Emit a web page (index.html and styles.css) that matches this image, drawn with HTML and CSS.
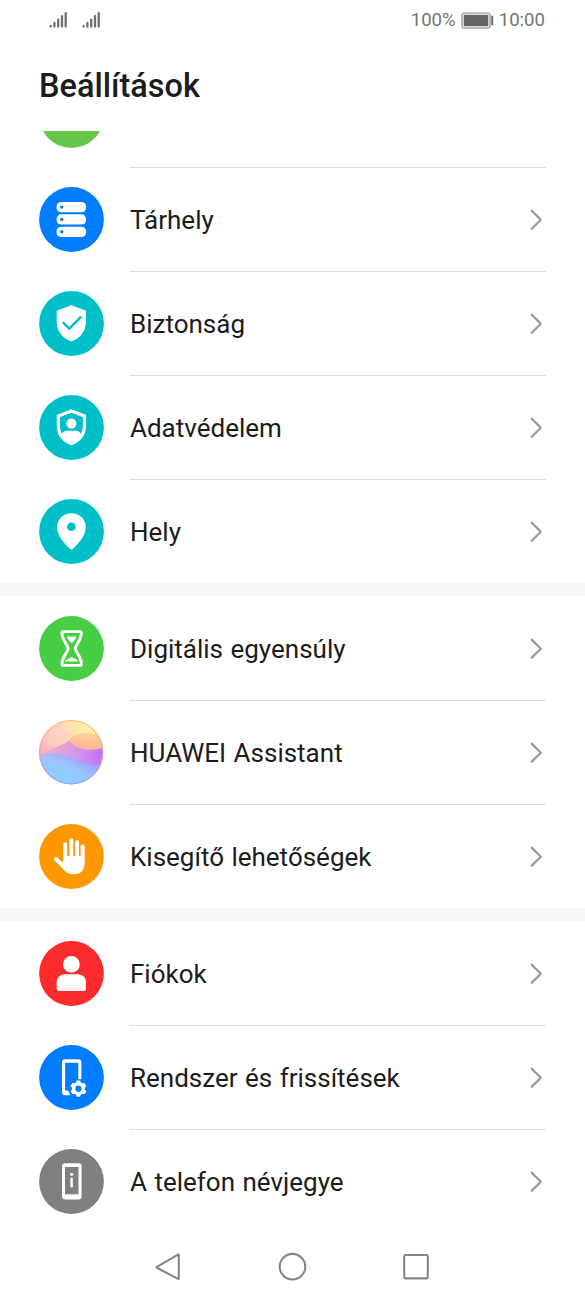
FILE: index.html
```html
<!DOCTYPE html>
<html lang="hu">
<head>
<meta charset="utf-8">
<title>Beállítások</title>
<link rel="stylesheet" href="styles.css">
</head>
<body>
<svg class="defs" width="0" height="0" aria-hidden="true">
  <symbol id="chevron" viewBox="0 0 16 24"><path d="M2.7 2.6 11.8 11.7 2.7 20.8" fill="none" stroke="#9a9a9a" stroke-width="2.3" stroke-linecap="round" stroke-linejoin="round"/></symbol>
  <symbol id="signal" viewBox="0 0 20 18"><path d="M2.6 15v.6M6.4 12v3.6M10.2 8.7v6.9M14 5.2v10.4M17.7 2.2v13.4" stroke="#707070" stroke-width="2.3" stroke-linecap="round"/></symbol>
</svg>
<div class="screen">
  <header class="status">
    <div class="signals">
      <svg class="signal"><use href="#signal"/></svg>
      <svg class="signal"><use href="#signal"/></svg>
    </div>
    <div class="power">
      <span>100%</span>
      <svg class="battery" viewBox="0 0 33 17"><rect x="1" y="1" width="28" height="15" rx="2.5" fill="#fff" stroke="#aaa" stroke-width="1.6"/><rect x="2.7" y="2.7" width="24.6" height="11.6" rx=".8" fill="#656565"/><path d="M31.2 4.5v8" stroke="#707070" stroke-width="2" stroke-linecap="round"/></svg>
      <span>10:00</span>
    </div>
  </header>
  <h1 class="title">Beállítások</h1>
  <main class="list">
    <div class="partial"><svg class="icon" viewBox="0 0 65 65"><circle cx="32.5" cy="32.5" r="32.4" fill="#67c74b"/></svg><div class="partial-body"></div></div>
    <section class="group">
      <div class="row">
        <svg class="icon" viewBox="0 0 65 65"><circle cx="32.5" cy="32.5" r="32.4" fill="#007dff"/><g fill="#fff"><rect x="17.6" y="15" width="29.5" height="10.3" rx="4.6"/><rect x="17.6" y="27.3" width="29.5" height="10.3" rx="4.6"/><rect x="17.6" y="39.7" width="29.5" height="10.3" rx="4.6"/></g><g fill="#007dff"><circle cx="22.7" cy="20.1" r="1.7"/><circle cx="22.7" cy="32.4" r="1.7"/><circle cx="22.7" cy="44.8" r="1.7"/></g></svg>
        <div class="body"><span>Tárhely</span><svg class="chevron"><use href="#chevron"/></svg></div>
      </div>
      <div class="row">
        <svg class="icon" viewBox="0 0 65 65"><circle cx="32.5" cy="32.5" r="32.4" fill="#00bfc9"/><path d="M31.6 14.4Q32.4 14 33.2 14.4L46 19.2Q47 19.6 47 20.7V30C47 40 41.5 46.8 33.4 50.1Q32.4 50.5 31.4 50.1C23.3 46.8 17.7 40 17.7 30V20.7Q17.7 19.6 18.7 19.2Z" fill="#fff"/><path d="m24.6 32 5.6 5.6 11.3-11.3" fill="none" stroke="#00bfc9" stroke-width="2.4" stroke-linecap="round" stroke-linejoin="round"/></svg>
        <div class="body"><span>Biztonság</span><svg class="chevron"><use href="#chevron"/></svg></div>
      </div>
      <div class="row">
        <svg class="icon" viewBox="0 0 65 65"><circle cx="32.5" cy="32.5" r="32.4" fill="#00bfc9"/><path d="M32.4 15.9 45.5 21V30C45.5 39.2 40.5 45.4 32.4 48.6C24.3 45.4 19.3 39.2 19.3 30V21Z" fill="none" stroke="#fff" stroke-width="3.2" stroke-linejoin="round"/><circle cx="32.4" cy="28.6" r="5" fill="#fff"/><path d="M22.2 40.2C23.6 37.2 25.4 35.8 28 35.8H36.8C39.4 35.8 41.2 37.2 42.6 40.2L38.5 45.2 32.4 49 26.3 45.2Z" fill="#fff"/></svg>
        <div class="body"><span>Adatvédelem</span><svg class="chevron"><use href="#chevron"/></svg></div>
      </div>
      <div class="row">
        <svg class="icon" viewBox="0 0 65 65"><circle cx="32.5" cy="32.5" r="32.4" fill="#00bfc9"/><path d="M32.4 14.2C24 14.2 18 20.5 18 28C18 37 26.2 45.4 31 49.9Q32.4 51 33.8 49.9C38.6 45.4 46.8 37 46.8 28C46.8 20.5 40.8 14.2 32.4 14.2Z" fill="#fff"/><circle cx="32.4" cy="27.7" r="4.3" fill="#00bfc9"/></svg>
        <div class="body"><span>Hely</span><svg class="chevron"><use href="#chevron"/></svg></div>
      </div>
    </section>
    <section class="group">
      <div class="row">
        <svg class="icon" viewBox="0 0 65 65"><circle cx="32.5" cy="32.5" r="32.4" fill="#47cd46"/><path d="M24.4 15.6H41Q42.4 15.6 42.4 17C42.4 24 36.8 28.5 36.2 32.5C36.8 36.5 42.4 41 42.4 48Q42.4 49.4 41 49.4H24.4Q23 49.4 23 48C23 41 28.6 36.5 29.2 32.5C28.6 28.5 23 24 23 17Q23 15.6 24.4 15.6Z" fill="none" stroke="#fff" stroke-width="2.9"/><path d="M28.2 21.5C28.2 19.8 31.4 19.8 32.7 21.1C34.2 19.8 37.2 19.8 37.2 21.6C37 23.4 34.6 25.5 32.7 27C30.8 25.6 28.6 23.4 28.2 21.5ZM26 45.6C26.6 43.4 31 42.6 32.7 40.8C34.4 42.6 38.8 43.4 39.4 45.6Z" fill="#fff"/></svg>
        <div class="body"><span>Digitális egyensúly</span><svg class="chevron"><use href="#chevron"/></svg></div>
      </div>
      <div class="row">
        <svg class="icon" viewBox="0 0 65 65"><defs><clipPath id="orb"><circle cx="32.2" cy="32.2" r="32"/></clipPath><linearGradient id="sky" x1="0" y1=".6" x2=".7" y2="0"><stop stop-color="#f9a8c0"/><stop offset=".4" stop-color="#fdcbbb"/><stop offset="1" stop-color="#fff3a8"/></linearGradient><linearGradient id="peach" x1=".6" y1="0" x2=".4" y2="1"><stop stop-color="#ffd590"/><stop offset="1" stop-color="#fbb09a"/></linearGradient><linearGradient id="violet"><stop stop-color="#f7b0c8"/><stop offset=".5" stop-color="#dc9ce4"/><stop offset="1" stop-color="#bb70fa"/></linearGradient><linearGradient id="sea" x1=".2" y1="1" x2=".9" y2=".1"><stop stop-color="#80d6ff"/><stop offset=".55" stop-color="#9ac4ff"/><stop offset="1" stop-color="#a97cff"/></linearGradient><linearGradient id="mist" x1="0" y1="0" x2="0" y2="1"><stop stop-color="#c5b8f6"/><stop offset="1" stop-color="#8ac8ff" stop-opacity="0"/></linearGradient><linearGradient id="rim" x1="0" y1="0" x2="0" y2="1"><stop stop-color="#f9c77f"/><stop offset=".5" stop-color="#f19baf"/><stop offset="1" stop-color="#9aa5f4"/></linearGradient></defs><g clip-path="url(#orb)"><path d="M0 0H65V65H0Z" fill="url(#sky)"/><path d="M7 19C8 5 20 2 26 9C34 17 27 26 16 26C10 25 7 22 7 19Z" fill="#ffcfc4" opacity=".6"/><path d="M0 36C10 28 20 28 31 20C42 27 50 32 65 27V48H0Z" fill="url(#violet)"/><path d="M30 20C37 11 54 11 65 18V27C52 32 37 31 30 20Z" fill="url(#peach)"/><path d="M0 36C11 31 24 33 36 38C46 44 55 46 65 44V65H0Z" fill="url(#sea)"/><path d="M0 36C11 31 24 33 36 38V51H0Z" fill="url(#mist)" opacity=".5"/></g><circle cx="32.2" cy="32.2" r="31.6" fill="none" stroke="url(#rim)" stroke-width="1.2"/></svg>
        <div class="body"><span>HUAWEI Assistant</span><svg class="chevron"><use href="#chevron"/></svg></div>
      </div>
      <div class="row">
        <svg class="icon" viewBox="0 0 65 65"><circle cx="32.5" cy="32.5" r="32.4" fill="#ff9800"/><g fill="none" stroke="#fff" stroke-width="4" stroke-linecap="round"><path d="M26.2 20.2V37M32.3 16.3V35M38 18.2V35M43.6 22.3V36"/><path d="m17 35 8.5 8.5"/></g><path d="M24.2 32H45.6V39C45.6 46 42 50.3 35 50.3C30.2 50.3 27.4 48.8 24.6 45.4L20.6 40 24.2 38Z" fill="#fff"/></svg>
        <div class="body"><span>Kisegítő lehetőségek</span><svg class="chevron"><use href="#chevron"/></svg></div>
      </div>
    </section>
    <section class="group">
      <div class="row">
        <svg class="icon" viewBox="0 0 65 65"><circle cx="32.5" cy="32.5" r="32.4" fill="#fa2a2d"/><circle cx="32.4" cy="23.4" r="8.4" fill="#fff"/><path d="M25.7 33.2H39C44 33.2 47 36.8 47 41.5V47.5Q47 50 44.5 50H20.2Q17.7 50 17.7 47.5V41.5C17.7 36.8 20.8 33.2 25.7 33.2Z" fill="#fff"/></svg>
        <div class="body"><span>Fiókok</span><svg class="chevron"><use href="#chevron"/></svg></div>
      </div>
      <div class="row">
        <svg class="icon" viewBox="0 0 65 65"><circle cx="32.5" cy="32.5" r="32.4" fill="#007dff"/><path d="M31.5 50.2H26Q23 50.2 23 47.2V17.3Q23 14.3 26 14.3H39.4Q42.4 14.3 42.4 17.3V34.3H39.3V17.8H26.1V45.6H29Z" fill="#fff"/><g fill="#fff"><circle cx="39.4" cy="43.7" r="6.6"/><path id="tooth" d="M37 38 37.6 35.6H41.2L41.8 38Z"/><use href="#tooth" transform="rotate(60 39.4 43.7)"/><use href="#tooth" transform="rotate(120 39.4 43.7)"/><use href="#tooth" transform="rotate(180 39.4 43.7)"/><use href="#tooth" transform="rotate(240 39.4 43.7)"/><use href="#tooth" transform="rotate(300 39.4 43.7)"/></g><circle cx="39.4" cy="43.7" r="3.1" fill="#007dff"/></svg>
        <div class="body"><span>Rendszer és frissítések</span><svg class="chevron"><use href="#chevron"/></svg></div>
      </div>
      <div class="row">
        <svg class="icon" viewBox="0 0 65 65"><circle cx="32.5" cy="32.5" r="32.4" fill="#808080"/><rect x="23" y="14.2" width="19.6" height="36.2" rx="3" fill="#fff"/><path d="M26 18H39.5V45.3H26Z" fill="#808080"/><circle cx="32.6" cy="25.3" r="1.6" fill="#fff"/><path d="M32.6 29.8V37.2" stroke="#fff" stroke-width="2.4" stroke-linecap="round"/></svg>
        <div class="body"><span>A telefon névjegye</span><svg class="chevron"><use href="#chevron"/></svg></div>
      </div>
    </section>
  </main>
  <nav class="nav">
    <svg viewBox="0 0 30 30"><path d="M2.9 14.8 24 2.7Q24.8 2.3 24.8 3.3V26.3Q24.8 27.3 24 26.9L2.9 15.8Q2 15.3 2.9 14.8Z"/></svg>
    <svg viewBox="0 0 30 30"><circle cx="14.5" cy="14.7" r="12.8"/></svg>
    <svg viewBox="0 0 30 30"><rect x="2.2" y="3" width="23.6" height="23.4" rx="1.3"/></svg>
  </nav>
</div>
</body>
</html>
```
FILE: styles.css
```css
* { box-sizing: border-box; }
body { margin: 0; background: #fff; font-family: Roboto, "Liberation Sans", sans-serif; color: #1c1c1c; }
svg { display: block; flex: none; }
.defs { position: absolute; }
.screen { width: 585px; height: 1300px; display: flex; flex-direction: column; overflow: hidden; }
.status { height: 40px; flex: none; display: flex; align-items: center; justify-content: space-between; padding: 0 40px 0 48px; color: #757575; font-size: 18.6px; }
.signals { display: flex; gap: 13px; }
.signal { width: 20px; height: 18px; }
.power { display: flex; align-items: center; gap: 5px; }
.battery { width: 33px; height: 17px; }
.title { margin: 0; height: 91px; flex: none; padding: 1px 39px 0; font-size: 32.5px; font-weight: 500; line-height: 91px; }
.list { flex: none; }
.partial { height: 37px; padding: 0 39px; display: flex; gap: 26px; align-items: flex-end; overflow: hidden; }
.partial .icon { margin-bottom: 20px; }
.partial-body { flex: 1; border-bottom: 1px solid #dcdcdc; }
.icon { width: 65px; height: 65px; }
.group + .group { border-top: 13px solid #f6f6f6; padding-top: 1px; }
.row { height: 104px; padding: 0 39px; display: flex; gap: 26px; align-items: center; }
.row .icon { margin-bottom: 1px; }
.body { flex: 1; height: 104px; display: flex; align-items: center; justify-content: space-between; border-bottom: 1px solid #dcdcdc; font-size: 26px; word-spacing: 1px; padding-top: 1px; }
.row:last-child .body { border-bottom: 0; }
.row:last-child { height: 103px; }
.row:last-child .body { height: 103px; }
.row:last-child .icon { margin-bottom: 0; }
.chevron { width: 16px; height: 24px; margin-top: -1px; margin-right: 1px; }
.nav { flex: 1; display: flex; justify-content: center; gap: 94px; padding-top: 19px; }
.nav svg { width: 30px; height: 30px; fill: none; stroke: #858585; stroke-width: 2.1; stroke-linejoin: round; }
```
